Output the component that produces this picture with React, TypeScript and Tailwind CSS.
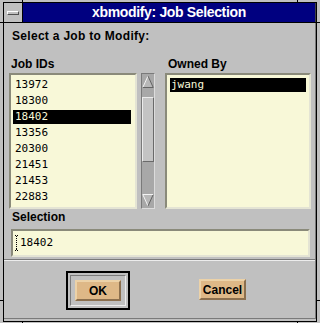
import React from "react";

const jobs = ["13972", "18300", "18402", "13356", "20300", "21451", "21453", "22883"];

function Row({ text, selected, padText }: { text: string; selected: boolean; padText: string }) {
  return (
    <div className="h-[16px] py-[1px]">
      <div
        className={
          selected
            ? `h-[14px] leading-[14px] ${padText} bg-black text-[#f8f8d8] whitespace-pre`
            : `h-[14px] leading-[14px] ${padText} text-black whitespace-pre`
        }
      >
        {text}
      </div>
    </div>
  );
}

function UpArrow() {
  return (
    <svg width="12" height="13" viewBox="0 0 12 13" className="block shrink-0">
      <polygon points="6,1 11,12 1,12" fill="#b8b8b8" />
      <line x1="1" y1="12" x2="6" y2="1" stroke="#f4f4f4" strokeWidth="1" />
      <line x1="6" y1="1" x2="11" y2="12" stroke="#646464" strokeWidth="1" />
      <line x1="1" y1="12.5" x2="11.5" y2="12.5" stroke="#646464" strokeWidth="1" />
    </svg>
  );
}

function DownArrow() {
  return (
    <svg width="12" height="13" viewBox="0 0 12 13" className="block shrink-0">
      <polygon points="1,1 11,1 6,12" fill="#b8b8b8" />
      <line x1="0.5" y1="0.5" x2="11" y2="0.5" stroke="#f4f4f4" strokeWidth="1" />
      <line x1="1" y1="1" x2="6" y2="12" stroke="#f4f4f4" strokeWidth="1" />
      <line x1="11" y1="1" x2="6" y2="12" stroke="#646464" strokeWidth="1" />
    </svg>
  );
}

export default function App() {
  return (
    <div className="relative w-[320px] h-[323px] bg-[#c0c0c0] pt-[2px] pl-[3px] pr-[3px] pb-[1px] overflow-hidden font-['Liberation_Sans',Arial,sans-serif] text-black">
      {/* frame corner ticks */}
      <div className="absolute left-[22px] top-0 w-[1px] h-[2px] bg-black" />
      <div className="absolute left-[297px] top-0 w-[1px] h-[2px] bg-black" />
      <div className="absolute left-[22px] bottom-0 w-[1px] h-[2px] bg-black" />
      <div className="absolute left-[297px] bottom-0 w-[1px] h-[2px] bg-black" />
      <div className="absolute left-0 top-[22px] w-[3px] h-[1px] bg-black" />
      <div className="absolute right-0 top-[22px] w-[3px] h-[1px] bg-black" />
      <div className="absolute left-0 top-[300px] w-[3px] h-[1px] bg-black" />
      <div className="absolute right-0 top-[300px] w-[3px] h-[1px] bg-black" />

      <div className="h-full border border-black flex flex-col">
        {/* title bar */}
        <div className="flex h-[20px] border-b border-black shrink-0">
          <div className="w-[19px] h-full border-r border-black flex items-center justify-center">
            <div className="w-[12px] h-[4px] bg-[#c0c0c0] border border-t-white border-l-white border-b-[#505050] border-r-[#505050]" />
          </div>
          <div className="flex-1 h-full bg-[#000080] border-r border-[#404040] flex items-center justify-center text-white font-bold text-[14px] tracking-[-0.35px] leading-[19px]">
            xbmodify: Job Selection
          </div>
        </div>

        {/* client */}
        <div className="h-[296px] shrink-0 border-b border-r border-[#7a7a7a] flex flex-col">
          <div className="pl-[8px] pt-[6px] h-[20px] leading-[14px] text-[12px] font-bold tracking-[0.3px]">
            Select a Job to Modify:
          </div>

          <div className="mt-[14px] flex h-[14px] leading-[14px] text-[12px] font-bold">
            <div className="ml-[7px] w-[157px]">Job IDs</div>
            <div>Owned By</div>
          </div>

          <div className="mt-[2px] flex h-[136px] pl-[5px]">
            <div className="w-[128px] h-full bg-[#f8f8d8] border-2 border-t-[#8a8a7a] border-l-[#8a8a7a] border-b-[#e4e4d4] border-r-[#e4e4d4] pt-[2px] pl-[2px] pr-[4px] font-['DejaVu_Sans_Mono',monospace] text-[11px]">
              {jobs.map((j) => (
                <Row key={j} text={j} selected={j === "18402"} padText="pl-[2px]" />
              ))}
            </div>

            <div className="ml-[4px] w-[14px] h-full bg-[#a8a8a8] border border-t-[#7a7a7a] border-l-[#7a7a7a] border-b-[#dcdcdc] border-r-[#dcdcdc] p-[1px] flex flex-col items-center">
              <UpArrow />
              <div className="mt-[9px] w-[12px] h-[65px] bg-[#c4c4c4] border border-t-[#ececec] border-l-[#ececec] border-b-[#6a6a6a] border-r-[#6a6a6a]" />
              <div className="flex-1" />
              <DownArrow />
            </div>

            <div className="ml-[10px] w-[146px] h-full bg-[#f8f8d8] border-2 border-t-[#8a8a7a] border-l-[#8a8a7a] border-b-[#e4e4d4] border-r-[#e4e4d4] pt-[2px] px-[3px] font-['DejaVu_Sans_Mono',monospace] text-[11px]">
              <Row text="jwang" selected={true} padText="pl-[1px]" />
            </div>
          </div>

          <div className="mt-[1px] pl-[8px] h-[14px] leading-[14px] text-[12px] font-bold">Selection</div>

          <div className="mt-[5px] ml-[7px] w-[299px] h-[28px] bg-[#f8f8d8] border-2 border-t-[#8a8a7a] border-l-[#8a8a7a] border-b-[#e4e4d4] border-r-[#e4e4d4] flex items-center pl-[2px] font-['DejaVu_Sans_Mono',monospace] text-[11px]">
            <svg width="4" height="16" viewBox="0 0 4 16" className="block shrink-0 mr-[1px]">
              <rect x="0" y="0" width="1" height="1" fill="#000" />
              <rect x="2" y="0" width="1" height="1" fill="#000" />
              <rect x="1" y="1" width="1" height="1" fill="#000" />
              <rect x="1" y="3" width="1" height="1" fill="#000" />
              <rect x="1" y="5" width="1" height="1" fill="#000" />
              <rect x="1" y="7" width="1" height="1" fill="#000" />
              <rect x="1" y="9" width="1" height="1" fill="#000" />
              <rect x="1" y="11" width="1" height="1" fill="#000" />
              <rect x="1" y="13" width="1" height="1" fill="#000" />
              <rect x="0" y="15" width="1" height="1" fill="#000" />
              <rect x="2" y="15" width="1" height="1" fill="#000" />
              <rect x="1" y="14" width="1" height="1" fill="#000" />
            </svg>
            <span className="leading-[14px]">18402</span>
          </div>

          <div className="mt-[2px] h-[2px] border-t border-b border-t-[#7a7a7a] border-b-[#ececec]" />

          <div className="flex-1 flex items-start pt-[10px] text-[12px] font-bold">
            <div className="ml-[62px] border-2 border-black p-[2px]">
              <div className="border border-t-[#7a7a7a] border-l-[#7a7a7a] border-b-[#ececec] border-r-[#ececec] p-[4px]">
                <div className="w-[46px] h-[21px] bg-[#deb887] border-2 border-t-[#ecd2a8] border-l-[#ecd2a8] border-b-[#8b6f4e] border-r-[#8b6f4e] flex items-center justify-center leading-[14px]">
                  OK
                </div>
              </div>
            </div>
            <div className="ml-[69px] mt-[8px] w-[47px] h-[21px] bg-[#deb887] border-2 border-t-[#ecd2a8] border-l-[#ecd2a8] border-b-[#8b6f4e] border-r-[#8b6f4e] flex items-center justify-center leading-[14px]">
              Cancel
            </div>
          </div>
        </div>
      </div>
    </div>
  );
}
